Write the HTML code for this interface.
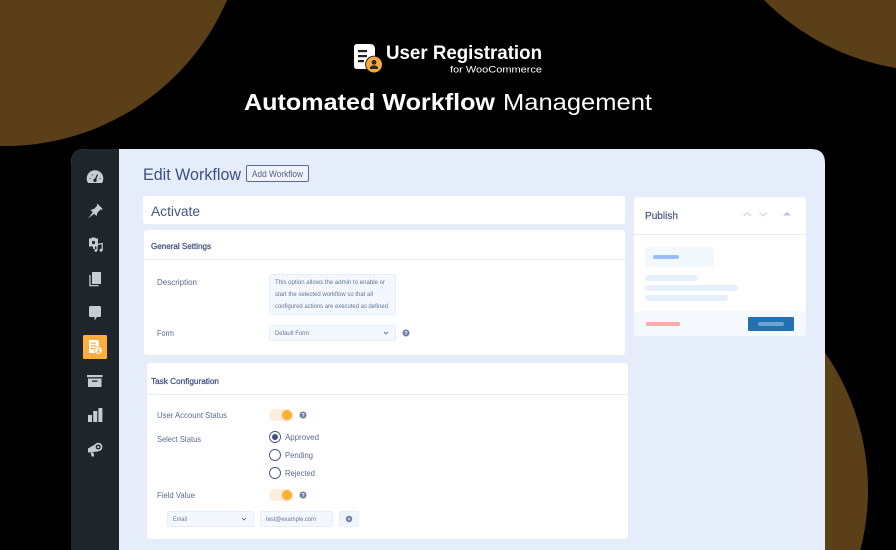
<!DOCTYPE html>
<html lang="en">
<head>
<meta charset="utf-8">
<title>Automated Workflow Management</title>
<style>
html,body{margin:0;padding:0;background:#000;width:896px;height:550px;overflow:hidden}
svg{display:block}
text{font-family:"Liberation Sans",sans-serif}
.l{font-size:8.5px;fill:#5a6a93}
.s{font-size:6px;fill:#64749c}
.h{font-size:8.5px;fill:#3e5080;stroke:#3e5080;stroke-width:.25px}
</style>
</head>
<body>
<svg xmlns="http://www.w3.org/2000/svg" width="896" height="550" viewBox="0 0 896 550">
<defs>
<filter id="sh" x="-60%" y="-60%" width="220%" height="220%"><feDropShadow dx="0" dy="1" stdDeviation="1.6" flood-color="#d9a35a" flood-opacity=".45"/></filter>
</defs>
<rect width="896" height="550" fill="#000"/>
<path d="M0 0H227.100A242 242 0 0 1 0 146z" fill="#5a3f18"/>
<path d="M764 0A242 242 0 0 0 896 68V0z" fill="#5a3f18"/>
<path d="M825 352.600A241 241 0 0 1 860.400 550H825z" fill="#5a3f18"/>

<!-- logo -->
<path d="M357 44h13q5 0 5 5v17q0 3-3 3h-15q-3 0-3-3V47q0-3 3-3z" fill="#fff"/>
<rect x="358" y="50" width="9" height="2.200" fill="#222"/>
<rect x="358" y="55" width="9" height="2.200" fill="#222"/>
<rect x="358" y="60" width="6" height="2.200" fill="#222"/>
<circle cx="374" cy="64.500" r="8.800" fill="#000"/>
<circle cx="374" cy="64.500" r="8" fill="#f5a93b"/>
<circle cx="374" cy="62.300" r="2.400" fill="#2a2a2a"/>
<path d="M369.800 69q0-3.600 4.200-3.600t4.200 3.600z" fill="#2a2a2a"/>
<text x="386" y="59" font-size="19" font-weight="700" fill="#fff" textLength="156" lengthAdjust="spacingAndGlyphs">User Registration</text>
<text x="450" y="72.500" font-size="9.500" fill="#fff" textLength="92" lengthAdjust="spacingAndGlyphs">for WooCommerce</text>

<!-- heading -->
<text x="244" y="110" font-size="23.500" font-weight="700" fill="#fff" textLength="251" lengthAdjust="spacingAndGlyphs">Automated Workflow</text>
<text x="503" y="110" font-size="23.500" fill="#fff" textLength="149" lengthAdjust="spacingAndGlyphs">Management</text>

<!-- panel -->
<path d="M85 149H811q14 0 14 14V550H71V163q0-14 14-14z" fill="#e5edfb"/>
<path d="M85 149H119V550H71V163q0-14 14-14z" fill="#1f262b"/>

<!-- sidebar icons -->
<g fill="#c9cccf">
<path d="M88 183q-1.300-2-1.300-4.500a8.300 8.300 0 0 1 16.600 0q0 2.500-1.300 4.500z"/>
<path d="M95 180.500L97.500 174.500" stroke="#1f262b" stroke-width="1.200" fill="none"/>
<circle cx="95" cy="180.300" r="1.700" fill="#1f262b"/>
<path d="M89.500 178.500h1.200M99.300 178.500h1.200M92 174.500l.6 .9" stroke="#1f262b" stroke-width=".8" fill="none"/>

<path d="M88 218.500l4.800-6.200-2.300-2.300 3.800-1.200 3-3.300-.7-1.300 1.200-.2 4.700 4.700-.2 1.200-1.300-.7-3.300 3-1.200 3.800-2.300-2.300z"/>

<path d="M89 238.500h2l1-1h3l1 1h2v8h-3v2.500h-2V246.500h-4z"/>
<circle cx="93.500" cy="242.500" r="1.600" fill="#1f262b"/>
<path d="M97 250.500v-6l5.200-1v7" stroke="#c9cccf" stroke-width="1.200" fill="none"/>
<circle cx="95.800" cy="250.500" r="1.400"/><circle cx="101" cy="250.200" r="1.400"/>

<rect x="92" y="272" width="9" height="12"/>
<path d="M90.600 275v10h7.900v1.200H89.300V275z"/>

<path d="M90.500 306h9q1.500 0 1.500 1.500v8q0 1.500-1.500 1.500h-2.500L94.500 320.500V317h-4q-1.500 0-1.500-1.500v-8q0-1.500 1.500-1.500z"/>

<rect x="87" y="375" width="15.500" height="2.200"/>
<path d="M88 378.500h13.500V387H88z"/>
<rect x="92" y="380.500" width="5.500" height="1.300" fill="#1f262b"/>

<rect x="88" y="415" width="4" height="7"/>
<rect x="93.200" y="411" width="4" height="11"/>
<rect x="98.400" y="408" width="4" height="14"/>

<path d="M88 448.500L98 442.800V451.500L88 452.500z"/>
<path d="M90.500 452.500h3l.7 4h-2.500z"/>
<circle cx="98.200" cy="447" r="4.200"/>
<circle cx="98.200" cy="447" r="2.500" fill="#1f262b"/>
<circle cx="98.200" cy="447" r="1.100"/>
</g>
<rect x="83" y="335" width="24" height="24" rx="1.500" fill="#ffae3c"/>
<path d="M90 340h6.500q2.500 0 2.500 2.500V352q0 1-1 1h-8q-1 0-1-1V341q0-1 1-1z" fill="#fff"/>
<g fill="#ffae3c"><rect x="90.500" y="342.500" width="5.500" height="1.200"/><rect x="90.500" y="345.300" width="5.500" height="1.200"/><rect x="90.500" y="348" width="3.500" height="1.200"/></g>
<circle cx="98.500" cy="350.500" r="4.400" fill="#ffae3c"/>
<circle cx="98.500" cy="350.500" r="3.500" fill="#fff"/>
<circle cx="98.500" cy="349.500" r="1.100" fill="#ffae3c"/>
<path d="M96.600 352.700q0-1.700 1.900-1.700t1.900 1.700z" fill="#ffae3c"/>

<!-- title -->
<text x="143" y="180" font-size="16.500" fill="#3e5080" textLength="98" lengthAdjust="spacingAndGlyphs">Edit Workflow</text>
<rect x="246.500" y="165.500" width="62" height="16" rx="1.500" fill="#eef3fd" stroke="#5a6a93" stroke-width="1"/>
<text x="252" y="177" font-size="8.800" fill="#4f5f88" textLength="51" lengthAdjust="spacingAndGlyphs">Add Workflow</text>

<!-- activate -->
<rect x="143" y="196" width="482" height="28" rx="3" fill="#fff"/>
<text x="151" y="216" font-size="13.500" fill="#44557f" textLength="49" lengthAdjust="spacingAndGlyphs">Activate</text>

<!-- general -->
<rect x="144" y="230" width="481" height="125" rx="3" fill="#fff"/>
<rect x="144" y="259" width="481" height="1" fill="#e5edfb"/>
<text x="151" y="249" class="h" textLength="60" lengthAdjust="spacingAndGlyphs">General Settings</text>
<text x="157" y="285" class="l" textLength="40" lengthAdjust="spacingAndGlyphs">Description</text>
<rect x="269.500" y="274.500" width="126" height="40" rx="1.500" fill="#f3f8fe" stroke="#e6eefb"/>
<text x="275" y="284.200" class="s" textLength="110" lengthAdjust="spacingAndGlyphs">This option allows the admin to enable or</text>
<text x="275" y="296.200" class="s" textLength="98" lengthAdjust="spacingAndGlyphs">start the selected workflow so that all</text>
<text x="275" y="308.200" class="s" textLength="113" lengthAdjust="spacingAndGlyphs">configured actions are executed as defined</text>
<text x="157" y="336" class="l" textLength="17" lengthAdjust="spacingAndGlyphs">Form</text>
<rect x="269.500" y="325.500" width="126" height="15" rx="1.500" fill="#f3f8fe" stroke="#e6eefb"/>
<text x="275" y="335.200" class="s" textLength="34" lengthAdjust="spacingAndGlyphs">Default Form</text>
<path d="M384 332l2 2 2-2" fill="none" stroke="#5f6f98" stroke-width=".9"/>
<circle cx="406" cy="333" r="3.500" fill="#6e7ea6"/>
<text x="406" y="335.200" font-size="5.500" font-weight="700" fill="#fff" text-anchor="middle">?</text>

<!-- task -->
<rect x="147" y="363" width="481" height="176" rx="3" fill="#fff"/>
<rect x="147" y="394" width="481" height="1" fill="#e5edfb"/>
<text x="151" y="384" class="h" textLength="68" lengthAdjust="spacingAndGlyphs">Task Configuration</text>

<text x="157" y="418" class="l" textLength="70" lengthAdjust="spacingAndGlyphs">User Account Status</text>
<rect x="269" y="409" width="24" height="12" rx="6" fill="#fdefe0"/>
<circle cx="287" cy="415" r="5" fill="#ffb136" filter="url(#sh)"/>
<circle cx="303" cy="415" r="3.500" fill="#6e7ea6"/>
<text x="303" y="417.200" font-size="5.500" font-weight="700" fill="#fff" text-anchor="middle">?</text>

<text x="157" y="442" class="l" textLength="44" lengthAdjust="spacingAndGlyphs">Select Status</text>
<circle cx="275" cy="437" r="5.500" fill="#fff" stroke="#3e5080" stroke-width=".9"/>
<circle cx="275" cy="437" r="3" fill="#3e5080"/>
<text x="285" y="440" class="l" textLength="34" lengthAdjust="spacingAndGlyphs">Approved</text>
<circle cx="275" cy="455" r="5.500" fill="#fff" stroke="#3e5080" stroke-width=".9"/>
<text x="285" y="458" class="l" textLength="28" lengthAdjust="spacingAndGlyphs">Pending</text>
<circle cx="275" cy="473" r="5.500" fill="#fff" stroke="#3e5080" stroke-width=".9"/>
<text x="285" y="476" class="l" textLength="30" lengthAdjust="spacingAndGlyphs">Rejected</text>

<text x="157" y="498" class="l" textLength="38" lengthAdjust="spacingAndGlyphs">Field Value</text>
<rect x="269" y="489" width="24" height="12" rx="6" fill="#fdefe0"/>
<circle cx="287" cy="495" r="5" fill="#ffb136" filter="url(#sh)"/>
<circle cx="303" cy="495" r="3.500" fill="#6e7ea6"/>
<text x="303" y="497.200" font-size="5.500" font-weight="700" fill="#fff" text-anchor="middle">?</text>

<rect x="167.500" y="511.500" width="86" height="15" rx="1.500" fill="#f3f8fe" stroke="#e6eefb"/>
<text x="173" y="521.200" class="s" textLength="14" lengthAdjust="spacingAndGlyphs">Email</text>
<path d="M242 518l2 2 2-2" fill="none" stroke="#5f6f98" stroke-width=".9"/>
<rect x="260.500" y="511.500" width="72" height="15" rx="1.500" fill="#f3f8fe" stroke="#e6eefb"/>
<text x="266" y="521.200" class="s" textLength="50" lengthAdjust="spacingAndGlyphs">test@example.com</text>
<rect x="339.500" y="511.500" width="19" height="15" rx="1.500" fill="#f0f5fd" stroke="#e6eefb"/>
<circle cx="349" cy="519" r="3.200" fill="#6e7ea6"/>
<path d="M347.600 519h2.800M349 517.600v2.800" stroke="#f0f5fd" stroke-width=".7"/>

<!-- publish -->
<rect x="634" y="197" width="172" height="139" rx="3" fill="#fff"/>
<rect x="634" y="234" width="172" height="1" fill="#e5edfb"/>
<path d="M634 311h172v22q0 3-3 3H637q-3 0-3-3z" fill="#f5f9fe"/>
<text x="645" y="219" font-size="10" fill="#3e5080" stroke="#3e5080" stroke-width=".15" textLength="33" lengthAdjust="spacingAndGlyphs">Publish</text>
<path d="M743.500 216l3.700-3.300 3.700 3.300M759.500 212.700l3.700 3.300 3.700-3.300" fill="none" stroke="#c6d1e6" stroke-width="1"/>
<path d="M783 215.500l4-3.800 4 3.800z" fill="#b7c3dc"/>
<rect x="645" y="247" width="69" height="20" rx="3" fill="#f3f8fe"/>
<rect x="653" y="255" width="26" height="4" rx="2" fill="#99bdff"/>
<rect x="645" y="275" width="53" height="6" rx="3" fill="#e6f1fd"/>
<rect x="645" y="285" width="93" height="6" rx="3" fill="#e6f1fd"/>
<rect x="645" y="295" width="83" height="6" rx="3" fill="#e6f1fd"/>
<rect x="646" y="322" width="34" height="4" rx="1.500" fill="#ffaaaa"/>
<rect x="748" y="317" width="46" height="14" rx="1" fill="#2271b1"/>
<rect x="758" y="322" width="26" height="4" rx="2" fill="#6fa4d0"/>
</svg>
</body>
</html>
